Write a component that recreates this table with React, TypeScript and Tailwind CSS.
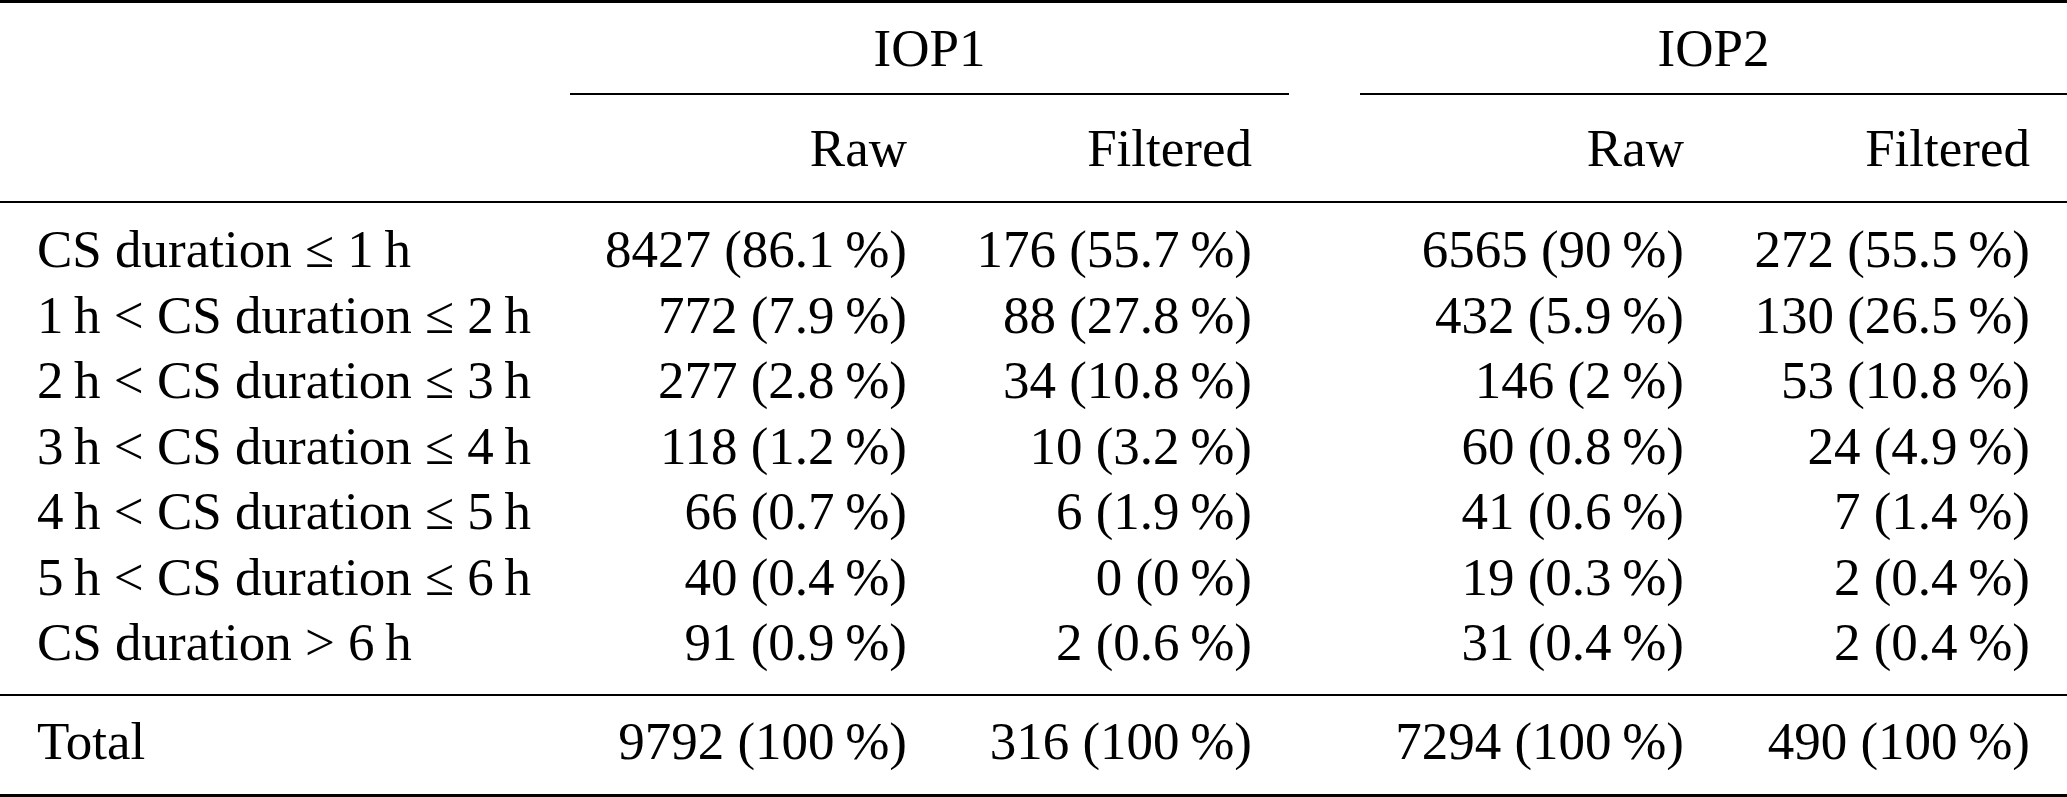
import React from 'react';

const cols = 'grid grid-cols-[570px_374px_345px_71px_361px_346px]';

const rows: string[][] = [
  ['CS duration ≤ 1\u2009h', '8427 (86.1\u2009%)', '176 (55.7\u2009%)', '6565 (90\u2009%)', '272 (55.5\u2009%)'],
  ['1\u2009h < CS duration ≤ 2\u2009h', '772 (7.9\u2009%)', '88 (27.8\u2009%)', '432 (5.9\u2009%)', '130 (26.5\u2009%)'],
  ['2\u2009h < CS duration ≤ 3\u2009h', '277 (2.8\u2009%)', '34 (10.8\u2009%)', '146 (2\u2009%)', '53 (10.8\u2009%)'],
  ['3\u2009h < CS duration ≤ 4\u2009h', '118 (1.2\u2009%)', '10 (3.2\u2009%)', '60 (0.8\u2009%)', '24 (4.9\u2009%)'],
  ['4\u2009h < CS duration ≤ 5\u2009h', '66 (0.7\u2009%)', '6 (1.9\u2009%)', '41 (0.6\u2009%)', '7 (1.4\u2009%)'],
  ['5\u2009h < CS duration ≤ 6\u2009h', '40 (0.4\u2009%)', '0 (0\u2009%)', '19 (0.3\u2009%)', '2 (0.4\u2009%)'],
  ['CS duration > 6\u2009h', '91 (0.9\u2009%)', '2 (0.6\u2009%)', '31 (0.4\u2009%)', '2 (0.4\u2009%)'],
];

const total = ['Total', '9792 (100\u2009%)', '316 (100\u2009%)', '7294 (100\u2009%)', '490 (100\u2009%)'];

const Row: React.FC<{ cells: string[]; height: string }> = ({ cells, height }) => (
  <div className={`${cols} ${height} items-center`}>
    <div className="px-[37px] whitespace-nowrap">{cells[0]}</div>
    <div className="pl-[16px] pr-[37px] text-right whitespace-nowrap">{cells[1]}</div>
    <div className="pl-[16px] pr-[37px] text-right whitespace-nowrap">{cells[2]}</div>
    <div />
    <div className="pl-[16px] pr-[37px] text-right whitespace-nowrap">{cells[3]}</div>
    <div className="pl-[16px] pr-[37px] text-right whitespace-nowrap">{cells[4]}</div>
  </div>
);

export default function App() {
  return (
    <div className="w-[2067px] h-[797px] bg-white text-black font-['Liberation_Serif','Times_New_Roman',serif] text-[53px] leading-none">
      {/* toprule */}
      <div className="h-[3px] bg-black" />

      {/* group headers */}
      <div className={`${cols} h-[90px] items-center`}>
        <div />
        <div className="col-span-2 text-center">IOP1</div>
        <div />
        <div className="col-span-2 text-center">IOP2</div>
      </div>

      {/* cmidrules */}
      <div className={`${cols} h-[2px]`}>
        <div />
        <div className="col-span-2 bg-black" />
        <div />
        <div className="col-span-2 bg-black" />
      </div>

      <Row cells={['', 'Raw', 'Filtered', 'Raw', 'Filtered']} height="h-[106px]" />

      {/* midrule */}
      <div className="h-[2px] bg-black" />

      <div className="pt-[14px] pb-[18.5px]">
        {rows.map((r, i) => (
          <Row key={i} cells={r} height="h-[65.5px]" />
        ))}
      </div>

      {/* midrule */}
      <div className="h-[2px] bg-black" />

      <Row cells={total} height="h-[90px]" />
      <div className="h-[8px]" />

      {/* bottomrule */}
      <div className="h-[3px] bg-black" />
    </div>
  );
}
